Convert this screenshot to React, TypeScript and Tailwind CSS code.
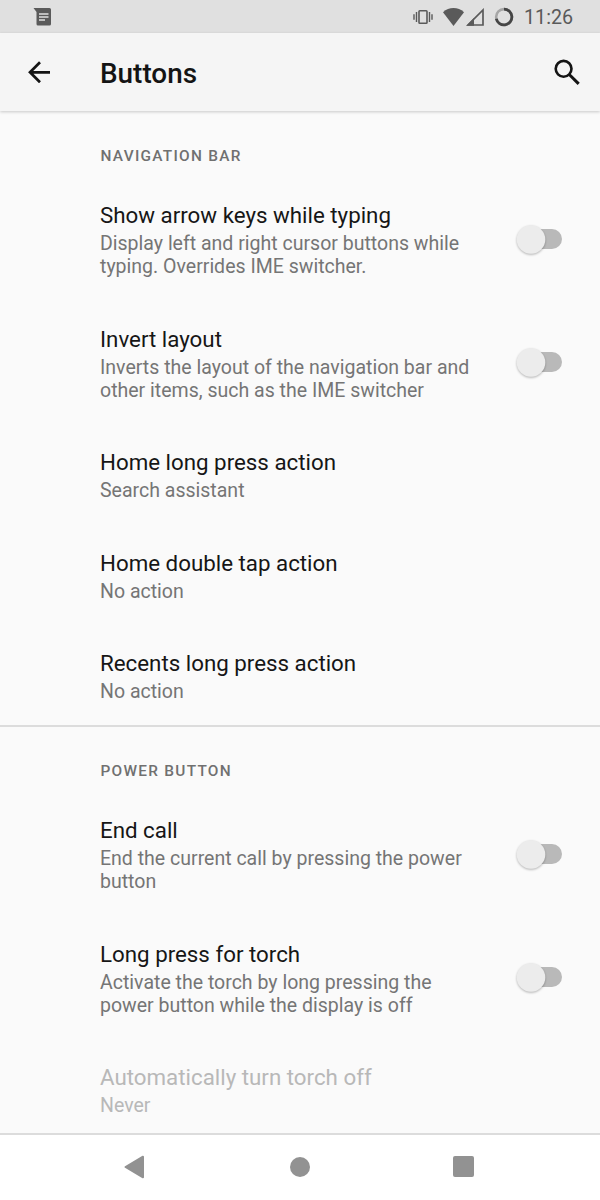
import React from "react";

function StatusBar() {
  return (
    <div className="flex h-[33px] shrink-0 items-center bg-[#e0e0e0] text-[#5a5a5a]">
      <svg className="ml-[33px] h-[18px] w-[18px]" viewBox="0 0 18 18">
        <path fill="currentColor" d="M0.500 0H16.500Q18 0 18 1.500V16Q18 17.500 16.500 17.500H5Q3.500 17.500 3.500 16V4Z" />
        <path stroke="#e0e0e0" strokeWidth="1.600" d="M6 6H15.500M6 9H15.500M6 12H12" />
      </svg>
      <div className="flex-1" />
      <svg className="h-[16px] w-[20px]" viewBox="0 0 20 16">
        <rect x="6" y="1.800" width="8" height="12.400" rx="0.800" fill="none" stroke="currentColor" strokeWidth="1.600" />
        <path stroke="currentColor" strokeWidth="1.400" d="M3.500 3V13M1 5.300V10.700M16.500 3V13M19 5.300V10.700" />
      </svg>
      <svg className="ml-[10px] h-[18px] w-[21px]" viewBox="0 0 22 18" preserveAspectRatio="none">
        <path fill="currentColor" d="M0 4.200Q4.800 0 11 0T22 4.200L11 18Z" />
      </svg>
      <svg className="ml-[2px] h-[18px] w-[18px]" viewBox="0 0 18 18">
        <path fill="none" stroke="currentColor" strokeWidth="1.700" d="M2 17H17V2Z" />
        <path fill="currentColor" d="M0.500 17.800L8 10V17.800Z" />
      </svg>
      <svg className="ml-[10px] h-[20px] w-[20px]" viewBox="0 0 20 20">
        <circle cx="10" cy="10" r="7.900" fill="none" stroke="#a6a6a6" strokeWidth="2.600" />
        <path fill="none" stroke="#454545" strokeWidth="2.800" d="M10 2.100A7.900 7.900 0 1 1 2.300 11.800" />
      </svg>
      <span className="ml-[10px] w-[76px] pt-[2px] text-[19.700px] leading-[32px]">11:26</span>
    </div>
  );
}

function AppBar() {
  return (
    <header className="z-10 flex h-[78px] shrink-0 items-center bg-[#f5f5f5] text-[#141414] shadow-[0_1px_3px_rgba(0,0,0,0.2)]">
      <svg className="ml-[28px] h-[22px] w-[22px]" viewBox="0 0 22 22">
        <path fill="none" stroke="currentColor" strokeWidth="2.700" d="M22 11.300H2M12 1.300L2 11.300L12 21.300" />
      </svg>
      <h1 className="ml-[50px] flex-1 pt-[3px] text-[27.900px] leading-[32px] font-medium">Buttons</h1>
      <svg className="mr-[20px] h-[26px] w-[26px]" viewBox="0 0 26 26">
        <circle cx="9.600" cy="9.800" r="7.900" fill="none" stroke="currentColor" strokeWidth="2.600" />
        <path stroke="currentColor" strokeWidth="3" d="M15 15.200L24.700 24.900" />
      </svg>
    </header>
  );
}

function Category({ children }: { children: string }) {
  return (
    <h2 className="h-[66.300px] pt-[34.200px] pl-[100.500px] text-[15.400px] leading-[20px] font-medium tracking-[1.270px] text-[#707070]">
      {children}
    </h2>
  );
}

function Toggle() {
  return (
    <svg className="mr-[36px] h-[36px] w-[50px] overflow-visible" viewBox="0 0 50 36">
      <rect x="12" y="7" width="36" height="20" rx="10" fill="#b9b9b9" />
      <circle cx="17" cy="17.500" r="14.300" fill="#ececec" className="drop-shadow-[0_1px_1px_rgba(0,0,0,0.28)]" />
    </svg>
  );
}

type PreferenceProps = {
  title: string;
  lines: string[];
  toggle?: boolean;
  disabled?: boolean;
};

function Preference({ title, lines, toggle, disabled }: PreferenceProps) {
  return (
    <div className={lines.length > 1 ? "flex h-[123.500px] items-center pb-[1px] pl-[100px]" : "flex h-[100.500px] items-center pb-[1px] pl-[100px]"}>
      <div className={disabled ? "flex-1 whitespace-nowrap text-[#b8b8b8]" : "flex-1 whitespace-nowrap text-[#161616]"}>
        <div className="pb-[3px] text-[22.320px] leading-[28px]">{title}</div>
        <div className={disabled ? "text-[19.520px] leading-[23px]" : "text-[19.520px] leading-[23px] text-[#757575]"}>
          {lines.map((line) => (
            <div key={line}>{line}</div>
          ))}
        </div>
      </div>
      {toggle && <Toggle />}
    </div>
  );
}

function NavigationBar() {
  return (
    <nav className="z-10 flex h-[67px] shrink-0 items-center justify-between border-t-2 border-[#dcdcdc] bg-white pr-[126px] pb-[2px] pl-[124px] text-[#929292]">
      <svg className="h-[24px] w-[21px]" viewBox="0 0 21 24">
        <path fill="currentColor" stroke="currentColor" strokeWidth="2" strokeLinejoin="round" d="M1.500 12L19 1.700V22.300Z" />
      </svg>
      <div className="ml-[1px] h-[20px] w-[20px] rounded-full bg-[#929292]" />
      <div className="h-[21px] w-[21px] rounded-[2px] bg-[#929292]" />
    </nav>
  );
}

export default function App() {
  return (
    <div className="flex h-[1200px] w-[600px] flex-col overflow-hidden bg-[#fafafa] font-['Roboto',sans-serif]">
      <StatusBar />
      <AppBar />
      <main className="min-h-0 flex-1 overflow-hidden">
        <section className="h-[614px] pt-px">
          <Category>NAVIGATION BAR</Category>
          <Preference title="Show arrow keys while typing" lines={["Display left and right cursor buttons while", "typing. Overrides IME switcher."]} toggle />
          <Preference title="Invert layout" lines={["Inverts the layout of the navigation bar and", "other items, such as the IME switcher"]} toggle />
          <Preference title="Home long press action" lines={["Search assistant"]} />
          <Preference title="Home double tap action" lines={["No action"]} />
          <Preference title="Recents long press action" lines={["No action"]} />
        </section>
        <section className="border-t-2 border-[#dcdcdc]">
          <Category>POWER BUTTON</Category>
          <Preference title="End call" lines={["End the current call by pressing the power", "button"]} toggle />
          <Preference title="Long press for torch" lines={["Activate the torch by long pressing the", "power button while the display is off"]} toggle />
          <Preference title="Automatically turn torch off" lines={["Never"]} disabled />
        </section>
      </main>
      <NavigationBar />
    </div>
  );
}
